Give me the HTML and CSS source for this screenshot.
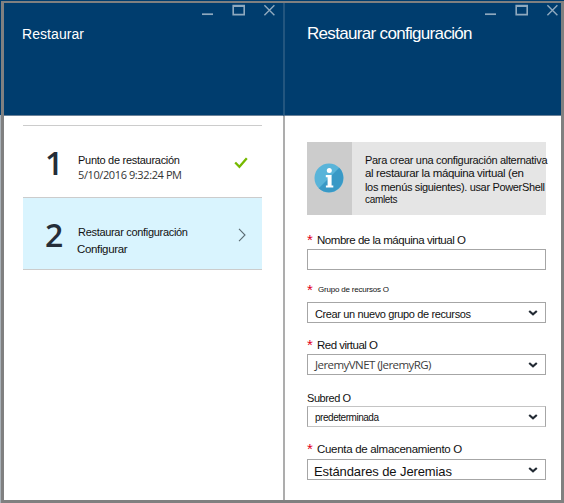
FILE: index.html
```
<!DOCTYPE html>
<html lang="es">
<head>
<meta charset="utf-8">
<title>Restaurar configuración</title>
<link rel="stylesheet" href="styles.css">
</head>
<body>
<svg class="defs" width="0" height="0">
  <symbol id="controls" viewBox="0 0 76 14">
    <path d="M0 11.2h11" fill="none" stroke="#8fa9be" stroke-width="1.7"/>
    <path d="M31.2 2.6h11v9h-11zM30.5 3.2h12.4" fill="none" stroke="#8fa9be" stroke-width="1.6"/>
    <path d="M62.4 2.2l10 10M72.4 2.2l-10 10" fill="none" stroke="#8fa9be" stroke-width="1.4"/>
  </symbol>
  <symbol id="caret" viewBox="0 0 10 6">
    <path d="M1.2 1L5 4.4 8.8 1" fill="none" stroke="#222a33" stroke-width="2.1"/>
  </symbol>
</svg>
<main class="window">
  <section class="blade blade-steps">
    <header class="head">
      <svg class="controls" width="76" height="14"><use href="#controls"/></svg>
      <h1 class="title title-small">Restaurar</h1>
    </header>
    <div class="steps">
      <div class="step">
        <div class="number">1</div>
        <div class="step-text">
          <div class="step-name name-point">Punto de restauración</div>
          <div class="step-date">5/10/2016 9:32:24 PM</div>
        </div>
        <svg class="check" width="14" height="12" viewBox="0 0 14 12"><path d="M1.2 5.5l4.2 4.3L12.8 1.2" fill="none" stroke="#76b900" stroke-width="2.3"/></svg>
      </div>
      <div class="step active">
        <div class="number">2</div>
        <div class="step-text">
          <div class="step-name name-config">Restaurar configuración</div>
          <div class="step-action">Configurar</div>
        </div>
        <svg class="chevron" width="8" height="14" viewBox="0 0 8 14"><path d="M1 .8L7 7 1 13.2" fill="none" stroke="#5b6b73" stroke-width="1.1"/></svg>
      </div>
    </div>
  </section>
  <section class="blade blade-config">
    <header class="head">
      <svg class="controls" width="76" height="14"><use href="#controls"/></svg>
      <h1 class="title title-large">Restaurar configuración</h1>
    </header>
    <div class="form">
      <div class="notice">
        <div class="notice-icon">
          <svg width="30" height="30" viewBox="0 0 30 30">
            <circle cx="15" cy="15" r="14.5" fill="#59b4d9"/>
            <path d="M25.25 4.75A14.5 14.5 0 0 1 4.75 25.25z" fill="#3999c6"/>
            <circle cx="15.3" cy="7.6" r="2.5" fill="#fff"/>
            <path d="M11.8 12h5.8v10.4h1.7v2.2h-7.4v-2.2h1.7v-8.2h-1.8z" fill="#fff"/>
          </svg>
        </div>
        <div class="notice-text">
          <div class="line-1">Para crear una configuración alternativa</div>
          <div class="line-2">al restaurar la máquina virtual (en</div>
          <div class="line-3">los menús siguientes). usar PowerShell</div>
          <div class="line-4">camlets</div>
        </div>
      </div>
      <label class="label label-name"><i class="star">*</i><span>Nombre de la máquina virtual O</span></label>
      <div class="field"></div>
      <label class="label label-group"><i class="star">*</i><span>Grupo de recursos O</span></label>
      <div class="field"><span class="value-group">Crear un nuevo grupo de recursos</span><svg class="caret"><use href="#caret"/></svg></div>
      <label class="label label-net"><i class="star">*</i><span>Red virtual O</span></label>
      <div class="field"><span class="value-net">JeremyVNET (JeremyRG)</span><svg class="caret"><use href="#caret"/></svg></div>
      <label class="label label-subnet"><span>Subred O</span></label>
      <div class="field pale"><span class="value-subnet">predeterminada</span><svg class="caret"><use href="#caret"/></svg></div>
      <label class="label label-account"><i class="star">*</i><span>Cuenta de almacenamiento O</span></label>
      <div class="field"><span class="value-account">Estándares de Jeremias</span><svg class="caret"><use href="#caret"/></svg></div>
    </div>
  </section>
</main>
</body>
</html>
```
FILE: styles.css
```
* { box-sizing: border-box; }
body {
  margin: 0;
  width: 564px;
  height: 503px;
  overflow: hidden;
  padding: 1px 0 0 1px;
  background: linear-gradient(#003d6e 0 115px, #a9b1b8 115px);
  font: 11px/14px "Liberation Sans", sans-serif;
  color: #111;
  white-space: nowrap;
}
.defs { position: absolute; }
.window {
  display: flex;
  width: 563px;
  height: 502px;
  border: 3px solid #808080;
  border-top-width: 2px;
  background: #fff;
}
.blade-steps { width: 279px; }
.blade-config { flex: 1; border-left: 2px solid #adadad; }
.head {
  height: 113px;
  padding: 0 3px 0 18px;
  background: #003d6e;
  border-bottom: 1px solid #6b8299;
}
.blade-config .head {
  margin-left: -2px;
  border-left: 2px solid #23567f;
  padding: 0 0 0 22px;
}
.controls { display: block; margin-left: auto; }
.blade-steps .controls { margin-right: 2px; }
.title { margin: 7px 0 0; font-weight: 400; line-height: 20px; color: #fff; }
.title-small { font-size: 14px; letter-spacing: .066px; }
.title-large { font-size: 17px; letter-spacing: -.68px; }

.steps { margin: 9px 21px 0 19px; border-top: 1px solid #ccc; }
.step { display: flex; height: 72px; border-bottom: 1px solid #ccc; }
.active { background: #d9f4fe; }
.number {
  width: 55px;
  padding: 21px 0 0 22px;
  font: 600 32px/32px "Open Sans", sans-serif;
  color: #252d38;
}
.step-text { flex: 1; padding-top: 27px; }
.name-point { letter-spacing: -.282px; }
.step-date { font: 11px/14px "Open Sans", sans-serif; letter-spacing: -.397px; color: #333; margin-top: 1px; }
.name-config { letter-spacing: -.309px; }
.step-action { font-size: 11.5px; letter-spacing: -.35px; margin: 3px 0 0 -1px; }
.check { margin: 31px 14px 0 0; }
.chevron { margin: 30px 16px 0 0; }

.form { width: 261px; padding: 26px 0 0 22px; }
.notice { display: flex; height: 73px; background: #e5e5e5; }
.notice-icon { flex: none; width: 45px; padding: 21px 0 0 7px; background: #ccc; }
.notice-text { padding: 11px 0 0 13px; }
.line-1 { letter-spacing: -.322px; height: 13px; }
.line-2 { font-size: 11.5px; letter-spacing: -.365px; }
.line-3 { letter-spacing: -.34px; height: 13px; }
.line-4 { font-size: 10px; letter-spacing: -.326px; }

.label { display: flex; height: 14px; font-size: 11.5px; }
.star { width: 10px; font: 15px/14px "Liberation Sans", sans-serif; color: #e2001a; }
.label-name { margin: 18px 0 2px; letter-spacing: -.46px; }
.label-group { margin: 13px 0 5px; font-size: 8px; letter-spacing: -.206px; }
.label-group .star { width: 11px; }
.label-net { margin: 15px 0 2px; letter-spacing: -.508px; }
.label-subnet { margin: 16px 0 1px; font-size: 11px; letter-spacing: -.442px; }
.label-account { margin: 15px 0 3px; letter-spacing: -.3px; }
.field {
  display: flex;
  align-items: center;
  justify-content: space-between;
  width: 239px;
  height: 21px;
  padding: 0 7px 0 7px;
  border: 1px solid #a6a6a6;
}
.pale { border-color: #c4c4c4 #a6a6a6; }
.caret { width: 10px; height: 6px; }
.value-group { letter-spacing: -.372px; padding-top: 2px; }
.value-net { font: 11.5px/14px "Open Sans", sans-serif; letter-spacing: -.56px; color: #3d3d3d; }
.value-subnet { font-size: 10px; letter-spacing: -.465px; padding-top: 2px; }
.value-account { font-size: 13px; letter-spacing: -.104px; padding-top: 4px; margin-left: -1px; }
```
